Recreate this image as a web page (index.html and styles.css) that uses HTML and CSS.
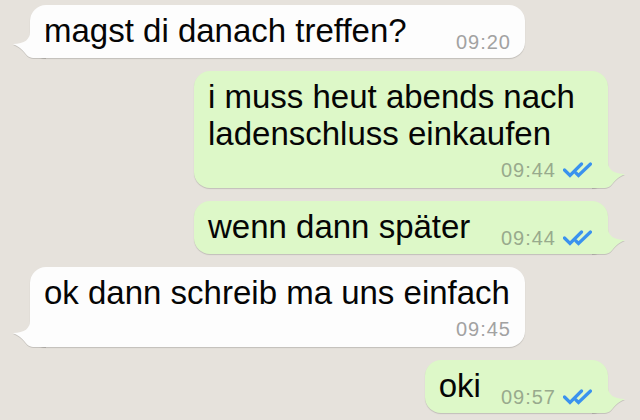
FILE: index.html
```html
<!DOCTYPE html>
<html lang="de">
  <head>
    <meta charset="UTF-8" />
    <meta name="viewport" content="width=device-width, initial-scale=1.0" />
    <link rel="stylesheet" href="styles.css">
    <title>Chat</title>
  </head>
  <body>
    <main class="chat">
      <div class="msg in">
        <div class="row">
          <p class="text">magst di danach treffen?</p>
          <div class="meta"><span class="time">09:20</span></div>
        </div>
        <svg class="tail" width="34" height="28" viewBox="0 0 34 28"><path d="M18 2 C18 9 13 14 1 14 C6 16 10 19 13 23 C15 26 18 28 23 28 L34 28 L34 2 Z"/></svg>
      </div>

      <div class="msg out wide">
        <p class="text">i muss heut abends nach ladenschluss einkaufen</p>
        <div class="meta">
          <span class="time">09:44</span>
          <svg class="ticks" width="32" height="16" viewBox="0 0 32 16"><path d="M1.5 8 L7 13.5 L18.5 2 M13 11 L15.5 13.5 L27.5 2"/></svg>
        </div>
        <svg class="tail" width="34" height="28" viewBox="0 0 34 28"><path d="M18 2 C18 9 13 14 1 14 C6 16 10 19 13 23 C15 26 18 28 23 28 L34 28 L34 2 Z"/></svg>
      </div>

      <div class="msg out wide">
        <div class="row">
          <p class="text">wenn dann später</p>
          <div class="meta">
            <span class="time">09:44</span>
            <svg class="ticks" width="32" height="16" viewBox="0 0 32 16"><path d="M1.5 8 L7 13.5 L18.5 2 M13 11 L15.5 13.5 L27.5 2"/></svg>
          </div>
        </div>
        <svg class="tail" width="34" height="28" viewBox="0 0 34 28"><path d="M18 2 C18 9 13 14 1 14 C6 16 10 19 13 23 C15 26 18 28 23 28 L34 28 L34 2 Z"/></svg>
      </div>

      <div class="msg in">
        <p class="text">ok dann schreib ma uns einfach</p>
        <div class="meta"><span class="time">09:45</span></div>
        <svg class="tail" width="34" height="28" viewBox="0 0 34 28"><path d="M18 2 C18 9 13 14 1 14 C6 16 10 19 13 23 C15 26 18 28 23 28 L34 28 L34 2 Z"/></svg>
      </div>

      <div class="msg out">
        <div class="row">
          <p class="text">oki</p>
          <div class="meta">
            <span class="time">09:57</span>
            <svg class="ticks" width="32" height="16" viewBox="0 0 32 16"><path d="M1.5 8 L7 13.5 L18.5 2 M13 11 L15.5 13.5 L27.5 2"/></svg>
          </div>
        </div>
        <svg class="tail" width="34" height="28" viewBox="0 0 34 28"><path d="M18 2 C18 9 13 14 1 14 C6 16 10 19 13 23 C15 26 18 28 23 28 L34 28 L34 2 Z"/></svg>
      </div>
    </main>
  </body>
</html>
```

FILE: styles.css
```css
* {
  padding: 0;
  margin: 0;
  box-sizing: border-box;
}

body {
  background-color: #e6e2dc;
  font-family: "Liberation Sans", Arial, sans-serif;
  height: 420px;
  overflow: hidden;
}

.chat {
  display: flex;
  flex-direction: column;
  gap: 13px;
  padding: 5px 32px 0 30px;
}

.msg {
  position: relative;
  padding: 7px 14px 8px 14px;
  border-radius: 16px;
  box-shadow: 0 1px 1px rgba(0, 0, 0, 0.16);
}

.msg.in {
  align-self: flex-start;
  width: 495px;
  background-color: #fdfdfd;
}

.msg.out {
  align-self: flex-end;
  padding-right: 13px;
  background-color: #ddf8c8;
}

.msg.out.wide {
  width: 414px;
}

.text {
  font-size: 33px;
  line-height: 37px;
  color: #050505;
  white-space: nowrap;
}

.msg.wide > .text {
  white-space: normal;
}

.row {
  display: flex;
  justify-content: space-between;
  align-items: flex-end;
  gap: 20px;
}

.msg:has(.row) {
  padding-bottom: 9px;
}

.row .meta {
  margin-top: 0;
  margin-bottom: -3px;
}

.meta {
  display: flex;
  justify-content: flex-end;
  align-items: center;
  gap: 7px;
  margin-top: 8px;
}

.time {
  font-size: 20px;
  line-height: 20px;
  letter-spacing: 1px;
  color: #a2a2a2;
}

.out .time {
  color: #98aa8d;
}

.ticks {
  display: block;
  fill: none;
  stroke: #3a92ee;
  stroke-width: 3.2;
  stroke-linecap: round;
  stroke-linejoin: miter;
}

.tail {
  position: absolute;
  bottom: 0;
  filter: drop-shadow(0 1px 0.5px rgba(0, 0, 0, 0.14));
}

.in .tail {
  left: -18px;
  fill: #fdfdfd;
}

.out .tail {
  right: -18px;
  fill: #ddf8c8;
  transform: scaleX(-1);
}
```
